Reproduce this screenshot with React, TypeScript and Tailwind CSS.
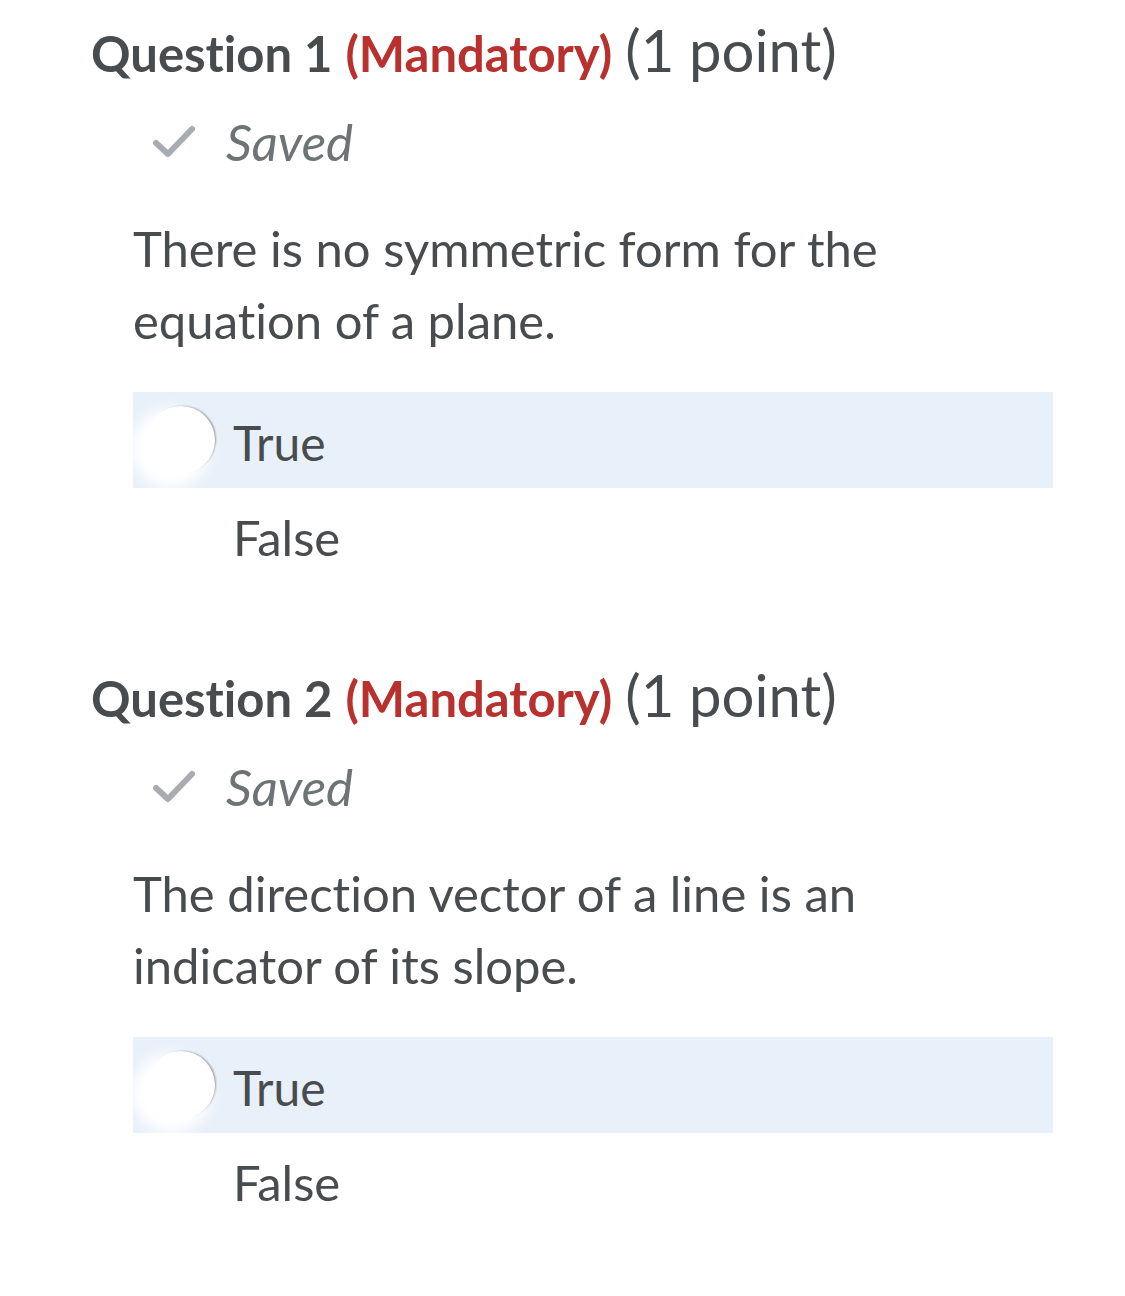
import React from "react"

type Question = {
  number: number
  text: string[]
}

const questions: Question[] = [
  { number: 1, text: ["There is no symmetric form for the", "equation of a plane."] },
  { number: 2, text: ["The direction vector of a line is an", "indicator of its slope."] },
]

function CheckIcon() {
  return (
    <svg width="44" height="34" viewBox="0 0 44 34" fill="none">
      <path
        d="M4 18 L16 29 L40 4"
        stroke="#a8acb0"
        strokeWidth="6"
        strokeLinecap="round"
        strokeLinejoin="round"
      />
    </svg>
  )
}

// the radio is washed out in the screenshot: white disc, faint edge on the right
function Radio() {
  return (
    <div className="absolute left-[14px] top-1/2 -translate-y-1/2 w-[68px] h-[68px] rounded-full bg-white shadow-[2px_-1px_2px_-1px_rgba(0,0,0,0.35),-10px_8px_14px_6px_#ffffff]" />
  )
}

function QuestionBlock({ q }: { q: Question }) {
  return (
    <section className="pl-[91px] h-[645px] text-[#494c4e] [font-variant-ligatures:none]">
      <h2 className="h-[110px] leading-[100px] whitespace-nowrap">
        <span className="text-[49px] font-bold">Question {q.number}</span>
        <span className="text-[49px] font-bold text-[#b8312f] ml-[13px]">(Mandatory)</span>
        <span className="text-[58px] ml-[13px]">(1 point)</span>
      </h2>
      <div className="flex items-center gap-[30px] pl-[61px] h-[64px]">
        <CheckIcon />
        <span className="text-[51px] italic text-[#6e7376]">Saved</span>
      </div>
      <div className="pl-[42px] pt-[38px] text-[49px] leading-[72px]">
        {q.text.map((line) => (
          <p key={line}>{line}</p>
        ))}
      </div>
      <div className="ml-[42px] mt-[36px] w-[920px]">
        <div className="relative h-[96px] bg-[#e8f0f9] flex items-center pl-[100px] pt-[6px]">
          <Radio />
          <span className="text-[48px]">True</span>
        </div>
        <div className="relative h-[96px] flex items-center pl-[100px] pt-[4px]">
          <span className="text-[49px]">False</span>
        </div>
      </div>
    </section>
  )
}

export default function App() {
  return (
    <div className="w-[1125px] h-[1296px] bg-white font-['Lato','Noto_Sans',sans-serif] overflow-hidden">
      {questions.map((q) => (
        <QuestionBlock key={q.number} q={q} />
      ))}
    </div>
  )
}
